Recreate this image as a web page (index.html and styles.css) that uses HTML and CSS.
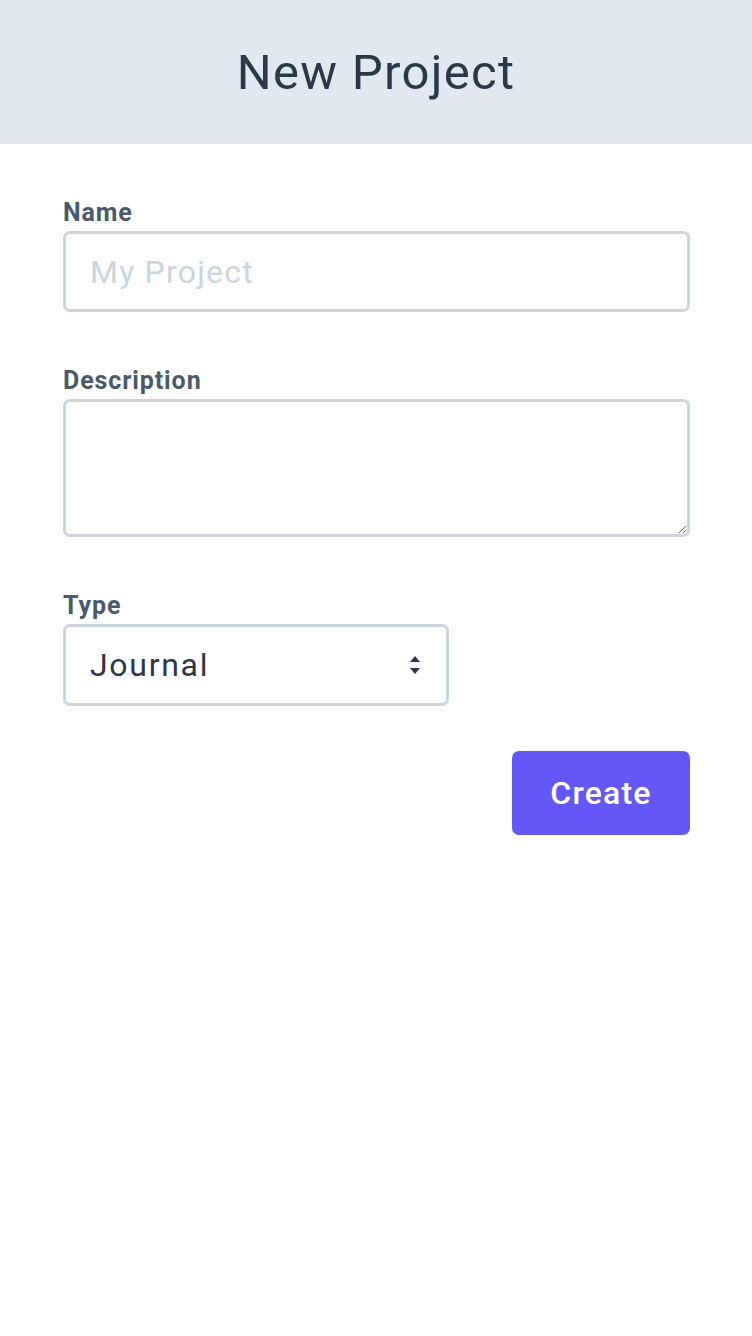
FILE: index.html
```html
<!DOCTYPE html>
<html lang="en">
<head>
<meta charset="utf-8">
<title>New Project</title>
<link rel="stylesheet" href="styles.css">
</head>
<body>
<header class="top">
  <h1 class="title">New Project</h1>
</header>
<main class="content">
  <form class="form">
    <div class="field">
      <label class="label" for="name">Name</label>
      <input class="input" id="name" type="text" placeholder="My Project">
    </div>
    <div class="field">
      <label class="label" for="desc">Description</label>
      <textarea class="input textarea" id="desc"></textarea>
    </div>
    <div class="field">
      <label class="label" for="type">Type</label>
      <div class="select-wrap">
        <select class="input select" id="type">
          <option>Journal</option>
        </select>
        <svg class="arrows" width="12" height="20" viewBox="0 0 12 20" aria-hidden="true">
          <path d="M6 1 L11 7 H1 Z" fill="#2d3748"/>
          <path d="M6 19 L11 13 H1 Z" fill="#2d3748"/>
        </svg>
      </div>
    </div>
    <div class="actions">
      <button class="btn" type="button">Create</button>
    </div>
  </form>
</main>
</body>
</html>
```
FILE: styles.css
```css
* { box-sizing: border-box; }
html, body { margin: 0; padding: 0; background: #fff; }
body {
  font-family: Roboto, "Noto Sans", "Liberation Sans", sans-serif;
  color: #2d3748;
}
.top {
  height: 144px;
  background: #e2e8f0;
  display: flex;
  align-items: center;
  justify-content: center;
}
.title {
  margin: 0;
  font-size: 49px;
  font-weight: 400;
  color: #2a3847;
  letter-spacing: 1.3px;
}
.content {
  padding: 53px 62px 0 63px;
}
.form {
  display: flex;
  flex-direction: column;
  gap: 53px;
}
.field {
  display: flex;
  flex-direction: column;
  gap: 2px;
}
.label {
  font-size: 25px;
  line-height: 32px;
  font-weight: 700;
  color: #4a5a6a;
  letter-spacing: 0.9px;
}
.input {
  width: 100%;
  height: 81px;
  border: 3px solid #cbd5e0;
  border-radius: 7px;
  padding: 0 24px;
  font-family: inherit;
  font-size: 32px;
  letter-spacing: 1.2px;
  color: #2d3748;
  background: #fff;
  outline: none;
}
.input::placeholder { color: #cbd5e0; }
.textarea {
  height: 138px;
  padding: 16px 24px;
  resize: vertical;
}
.select-wrap {
  position: relative;
  width: 386px;
}
.select {
  appearance: none;
  -webkit-appearance: none;
  height: 82px;
  padding-left: 24px;
  letter-spacing: 1.7px;
}
.arrows {
  position: absolute;
  right: 28px;
  top: 31px;
  pointer-events: none;
}
.actions {
  display: flex;
  justify-content: flex-end;
  margin-top: -8px;
}
.btn {
  width: 178px;
  height: 84px;
  border: none;
  border-radius: 7px;
  background: #6557f5;
  color: #fff;
  font-family: inherit;
  font-size: 32px;
  font-weight: 500;
  letter-spacing: 1.2px;
  cursor: pointer;
}
```
